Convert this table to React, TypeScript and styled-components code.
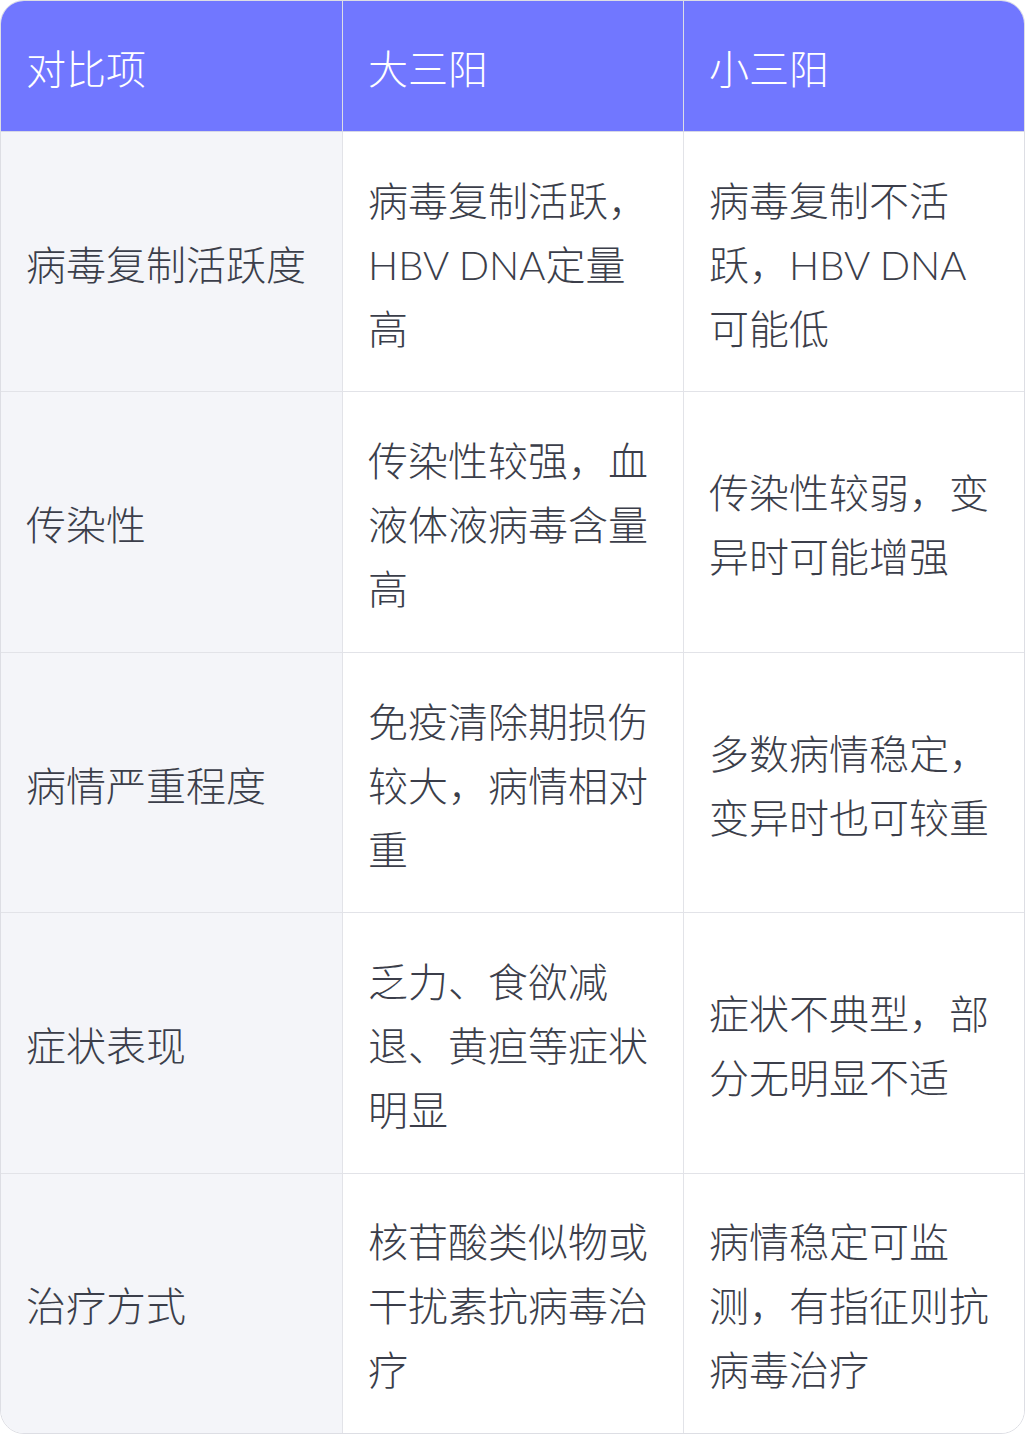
import { FunctionComponent } from "react";
import styled, { createGlobalStyle } from "styled-components";

const GlobalStyle = createGlobalStyle`
  html, body {
    margin: 0;
    padding: 0;
    background: #ffffff;
  }
  body {
    font-family: "Lato", "Noto Sans CJK SC", "Noto Sans", sans-serif;
  }
`;

const columns = ["对比项", "大三阳", "小三阳"];

const rows: string[][] = [
  ["病毒复制活跃度", "病毒复制活跃，HBV DNA定量高", "病毒复制不活跃，HBV DNA可能低"],
  ["传染性", "传染性较强，血液体液病毒含量高", "传染性较弱，变异时可能增强"],
  ["病情严重程度", "免疫清除期损伤较大，病情相对重", "多数病情稳定，变异时也可较重"],
  ["症状表现", "乏力、食欲减退、黄疸等症状明显", "症状不典型，部分无明显不适"],
  ["治疗方式", "核苷酸类似物或干扰素抗病毒治疗", "病情稳定可监测，有指征则抗病毒治疗"],
];

const App: FunctionComponent = () => {
  return (
    <>
      <GlobalStyle />
      <Container>
        <HeaderRow>
          {columns.map((column, index) => (
            <HeadCell key={index} $first={index === 0}>
              {column}
            </HeadCell>
          ))}
        </HeaderRow>
        {rows.map((row, rowIndex) => (
          <DataRow key={rowIndex} $last={rowIndex === rows.length - 1}>
            {row.map((cell, index) => (
              <DataCell key={index} $label={index === 0} $first={index === 0}>
                <CellText>{cell}</CellText>
              </DataCell>
            ))}
          </DataRow>
        ))}
      </Container>
    </>
  );
};

export default App;

const Container = styled.div`
  width: 1025px;
  height: 1434px;
  box-sizing: border-box;
  border: 1px solid #dddee4;
  border-radius: 24px;
  overflow: hidden;
  display: flex;
  flex-direction: column;
  background: #ffffff;
`;

const HeaderRow = styled.div`
  display: grid;
  grid-template-columns: 341px 341px 1fr;
  height: 131px;
  flex-shrink: 0;
  background: #7177ff;
  border-bottom: 1px solid #d6d8e6;
  box-sizing: border-box;
`;

const HeadCell = styled.div<{ $first: boolean }>`
  display: flex;
  align-items: center;
  padding: 6px 25px 0;
  color: #ffffff;
  font-size: 40px;
  font-weight: 300;
  line-height: 64px;
  border-left: ${({ $first }) => ($first ? "none" : "1px solid #dcdde6")};
`;

const DataRow = styled.div<{ $last: boolean }>`
  display: grid;
  grid-template-columns: 341px 341px 1fr;
  flex: 1;
  border-bottom: ${({ $last }) => ($last ? "none" : "1px solid #e2e3e8")};
`;

const DataCell = styled.div<{ $label: boolean; $first: boolean }>`
  display: flex;
  align-items: center;
  padding: 6px 25px 0;
  background: ${({ $label }) => ($label ? "#f4f5f9" : "#ffffff")};
  border-left: ${({ $first }) => ($first ? "none" : "1px solid #e2e3e8")};
`;

const CellText = styled.div`
  color: #3b3e4a;
  font-size: 40px;
  font-weight: 300;
  line-height: 64px;
  word-break: break-all;
`;
